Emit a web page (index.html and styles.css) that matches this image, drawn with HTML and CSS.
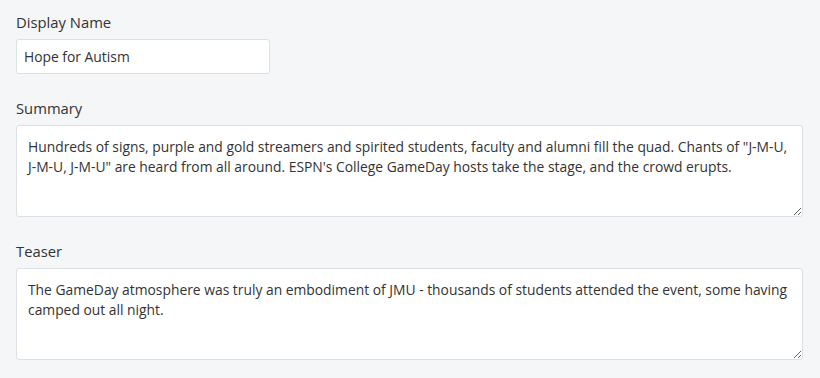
FILE: index.html
```html
<!DOCTYPE html>
<html>
<head>
<meta charset="utf-8">
<link rel="stylesheet" href="styles.css">
</head>
<body>
<form class="form">
  <div class="group">
    <label class="label" for="name">Display Name</label>
    <input class="input" id="name" type="text" value="Hope for Autism">
  </div>
  <div class="group">
    <label class="label" for="summary">Summary</label>
    <textarea class="textarea" id="summary">Hundreds of signs, purple and gold streamers and spirited students, faculty and alumni fill the quad. Chants of "J-M-U, J-M-U, J-M-U" are heard from all around. ESPN's College GameDay hosts take the stage, and the crowd erupts.</textarea>
  </div>
  <div class="group">
    <label class="label" for="teaser">Teaser</label>
    <textarea class="textarea" id="teaser">The GameDay atmosphere was truly an embodiment of JMU - thousands of students attended the event, some having camped out all night.</textarea>
  </div>
</form>
</body>
</html>
```

FILE: styles.css
```css
html, body {
  margin: 0;
  background: #f5f6f8;
}
body {
  padding: 12px 17px 0 16px;
  font-family: "Open Sans", "Liberation Sans", sans-serif;
  font-size: 14px;
  line-height: 20px;
  color: #333;
}
.form {
  display: flex;
  flex-direction: column;
  gap: 24px;
}
.group {
  display: flex;
  flex-direction: column;
  align-items: flex-start;
}
.label {
  margin-bottom: 7px;
  font-size: 14.8px;
  color: #333;
}
.input,
.textarea {
  box-sizing: border-box;
  font-family: inherit;
  font-size: 13.85px;
  line-height: 20px;
  color: #333;
  background: #fff;
  border: 1px solid #dcdfe3;
  border-radius: 3px;
  outline: none;
  margin: 0;
}
.input {
  width: 254px;
  height: 35px;
  padding: 6px 7px;
}
.textarea {
  width: 100%;
  height: 92px;
  padding: 11px 11px;
  resize: vertical;
}
```
